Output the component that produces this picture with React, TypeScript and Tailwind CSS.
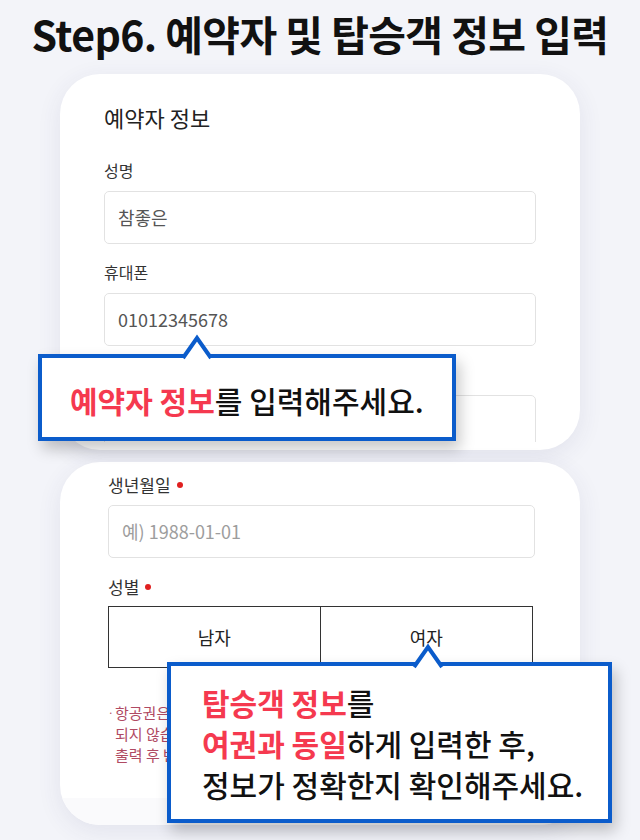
import React from 'react';

const font = { fontFamily: '"Noto Sans CJK KR", "Noto Sans", sans-serif' };

const Field: React.FC<{ label: string; value: string; first?: boolean }> = ({ label, value, first }) => (
  <div className={first ? '' : 'mt-[17px]'}>
    <div className="h-[22px] text-[16px] leading-[22px] text-[#333]">{label}</div>
    <div className="mt-[10px] flex h-[53px] items-center rounded-[5px] border border-[#e2e2e2] bg-white px-[13px]">
      <span className="text-[18px] text-[#555]">{value}</span>
    </div>
  </div>
);

const Arrow: React.FC<{ className: string }> = ({ className }) => (
  <svg className={`absolute ${className}`} width="34" height="28" viewBox="0 0 34 28">
    <polygon points="3,26 17,6 31,26" fill="#fff" />
    <polyline points="3,26 17,6 31,26" fill="none" stroke="#0b5ccb" strokeWidth="4" strokeLinejoin="miter" />
  </svg>
);

const App: React.FC = () => {
  return (
    <div className="relative h-[840px] w-[640px] overflow-hidden bg-[#f3f4f9]" style={font}>
      <div className="flex h-[74px] justify-center pt-[6px]">
        <h1 className="whitespace-nowrap text-[41px] font-bold leading-[54px] tracking-[-0.6px] text-[#111]">
          Step6. 예약자 및 탑승객 정보 입력
        </h1>
      </div>

      {/* 예약자 정보 */}
      <div className="ml-[60px] h-[376px] w-[520px] overflow-hidden rounded-[40px] bg-white shadow-[0_6px_24px_rgba(50,60,110,0.09)]">
        <div className="h-[368px] overflow-hidden pl-[44px] pr-[44px] pt-[29px]">
          <div className="text-[22px] leading-[28px] text-[#222]">예약자 정보</div>
          <div className="mt-[28px]">
            <Field first label="성명" value="참좋은" />
            <Field label="휴대폰" value="01012345678" />
            <Field label="" value="" />
          </div>
        </div>
      </div>

      {/* 탑승객 정보 */}
      <div className="ml-[60px] mt-[12px] flex h-[363px] w-[520px] flex-col overflow-hidden rounded-[40px] bg-white shadow-[0_6px_24px_rgba(50,60,110,0.09)]">
        <div className="h-[336px] overflow-hidden pl-[48px] pr-[45px] pt-[12px]">
          <div className="flex items-center gap-[6px] text-[17px] leading-[22px] text-[#333]">
            <span>생년월일</span>
            <span className="h-[6px] w-[6px] rounded-full bg-[#e02020]" />
          </div>
          <div className="mt-[9px] flex h-[53px] items-center rounded-[5px] border border-[#e2e2e2] px-[13px]">
            <span className="text-[18px] text-[#9d9d9d]">예) 1988-01-01</span>
          </div>
          <div className="mt-[18px] flex items-center gap-[6px] text-[17px] leading-[22px] text-[#333]">
            <span>성별</span>
            <span className="h-[6px] w-[6px] rounded-full bg-[#e02020]" />
          </div>
          <div className="mr-[2px] mt-[8px] grid h-[62px] grid-cols-2 border border-[#333]">
            <div className="flex items-center justify-center border-r border-[#333] text-[18px] text-[#222]">남자</div>
            <div className="flex items-center justify-center text-[18px] text-[#222]">여자</div>
          </div>
          <div className="mt-[34px] flex w-[59px] overflow-hidden text-[15px] leading-[21px] text-[#b04a63]">
            <span className="w-[7px] shrink-0 text-[10px]">·</span>
            <div className="whitespace-nowrap">
              <div>항공권은</div>
              <div>되지 않습</div>
              <div>출력 후 반</div>
            </div>
          </div>
        </div>
        <div className="flex-1 bg-[#fafafc]" />
      </div>

      {/* 안내 말풍선 1 */}
      <div className="absolute left-[38px] top-[354px] flex h-[87px] w-[418px] items-center border-[4px] border-[#0b5ccb] bg-white pl-[28px] pt-[4px] shadow-[4px_8px_14px_rgba(0,0,0,0.22)]">
        <Arrow className="left-[138px] top-[-26px]" />
        <p className="whitespace-nowrap text-[30px] font-medium leading-[38px] text-[#111]">
          <span className="font-bold text-[#f5394f]">예약자 정보</span>를 입력해주세요.
        </p>
      </div>

      {/* 안내 말풍선 2 */}
      <div className="absolute left-[167px] top-[662px] h-[161px] w-[445px] border-[4px] border-[#0b5ccb] bg-white pl-[31px] pt-[16px] shadow-[4px_8px_14px_rgba(0,0,0,0.22)]">
        <Arrow className="left-[240px] top-[-25px]" />
        <div className="whitespace-nowrap text-[30px] font-medium leading-[41px] text-[#111]">
          <div>
            <span className="font-bold text-[#f5394f]">탑승객 정보</span>를
          </div>
          <div>
            <span className="font-bold text-[#f5394f]">여권과 동일</span>하게 입력한 후,
          </div>
          <div>정보가 정확한지 확인해주세요.</div>
        </div>
      </div>
    </div>
  );
};

export default App;
